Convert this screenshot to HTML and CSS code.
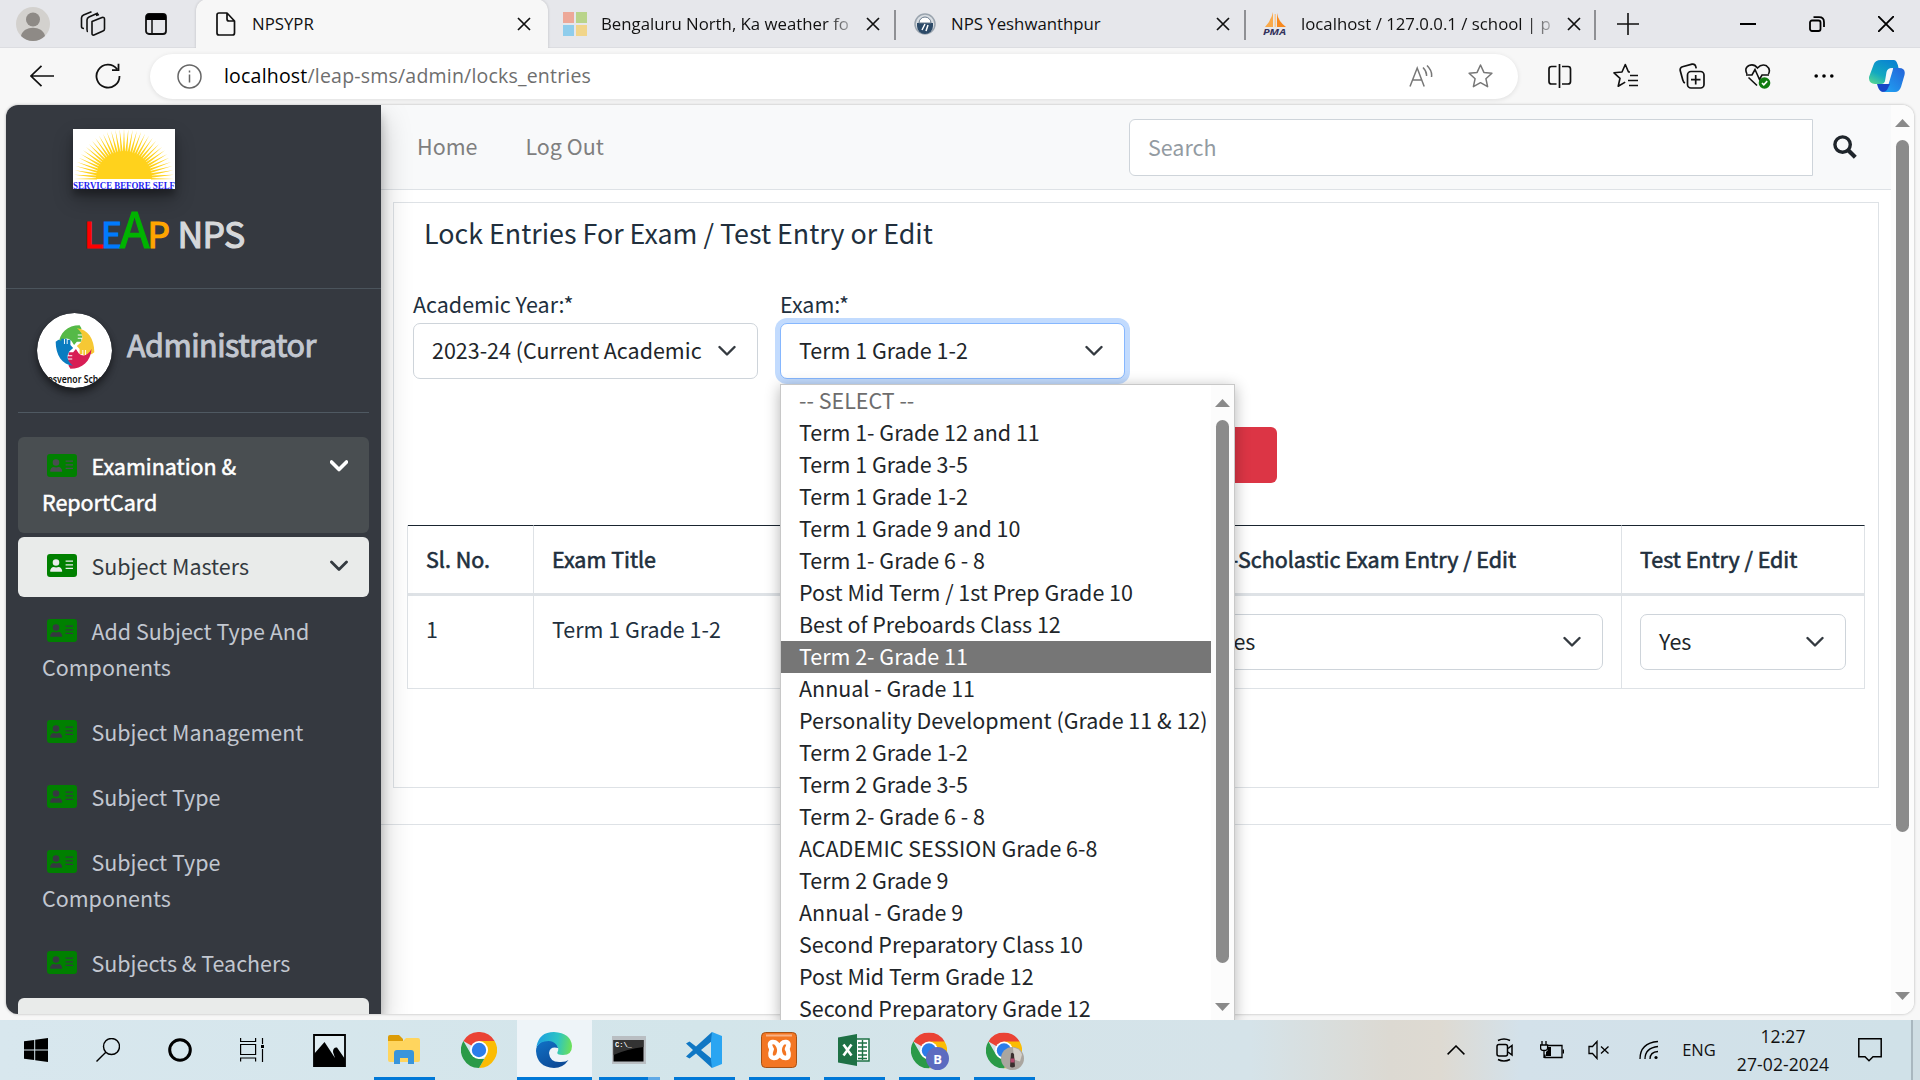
FILE: index.html
```html
<!DOCTYPE html>
<html lang="en">
<head>
<meta charset="utf-8">
<title>NPSYPR</title>
<link rel="stylesheet" href="styles.css">
</head>
<body>
<svg class="defs" aria-hidden="true">
  <defs>
    <symbol id="i-card" viewBox="0 0 30 23"><path fill="currentColor" fill-rule="evenodd" d="M3 0h24a3 3 0 0 1 3 3v17a3 3 0 0 1-3 3H3a3 3 0 0 1-3-3V3a3 3 0 0 1 3-3zM9 5.2a3.3 3.3 0 1 0 0 6.600a3.300 3.300 0 1 0 0-6.600zM3.700 17.800h11c.4 0 .6-.3.5-.7-.3-2.400-1.500-4.100-3.700-4.100-1 .6-3.600.6-4.700 0-2.200 0-3.400 1.700-3.700 4.100 0 .4.200.7.600.7zM18.600 6.600v1.200h7.400V6.600zM18.600 10.200v1.200h7.400v-1.200zM18.600 13.800v1.200h7.400v-1.200z"/></symbol>
    <symbol id="i-chev" viewBox="0 0 18 12"><path d="M1.500 2 9 9.500 16.500 2" fill="none" stroke="currentColor" stroke-linecap="round" stroke-linejoin="round"/></symbol>
    <symbol id="i-x" viewBox="0 0 14 14"><path d="M1 1l12 12M13 1L1 13" fill="none" stroke="#111" stroke-width="1.700"/></symbol>
    <symbol id="i-chrome" viewBox="0 0 36 36">
      <path fill="#ea4335" d="M18 18 2.400 9A18 18 0 0 1 33.600 9z"/>
      <path fill="#fbbc04" d="M18 9h15.600A18 18 0 0 1 18 36l7.800-13.500z"/>
      <path fill="#2a9a48" d="M2.400 9l7.800 13.500L18 27h5.200L18 36A18 18 0 0 1 2.400 9z"/>
      <circle cx="18" cy="18" r="9" fill="#fff"/><circle cx="18" cy="18" r="7.200" fill="#2b7de9"/>
    </symbol>
    <g id="ray"><path fill="#ffd21c" d="M27 -1.100 50 0 27 1.100z"/></g>
    <g id="rays"><use href="#ray"/><use href="#ray" transform="rotate(-5)"/><use href="#ray" transform="rotate(-10)"/><use href="#ray" transform="rotate(-15)"/><use href="#ray" transform="rotate(-20)"/><use href="#ray" transform="rotate(-25)"/></g>
    <path id="hand" d="M-18-2C-17-14-8-21 5-21L7-18 6-15H8V-12H3V-11H8V-9H3V-8H7V-5H2L-1-2-4-6C-9-10-14-8-18-2z"/>
    <linearGradient id="edge-a" x1="0" y1="0.300" x2="1" y2="0.400"><stop offset="0" stop-color="#1b9de2"/><stop offset=".6" stop-color="#2cc4c4"/><stop offset="1" stop-color="#6be05a"/></linearGradient>
    <linearGradient id="edge-b" x1="0" y1="0" x2="0.600" y2="1"><stop offset="0" stop-color="#1173c8"/><stop offset="1" stop-color="#0c4a97"/></linearGradient>
    <linearGradient id="cop-a" x1="0" y1="1" x2="0.600" y2="0"><stop offset="0" stop-color="#5fdc8c"/><stop offset=".45" stop-color="#12a9c0"/><stop offset="1" stop-color="#0a86d0"/></linearGradient>
    <linearGradient id="cop-b" x1="0" y1="1" x2="1" y2="0"><stop offset="0" stop-color="#1fa8f5"/><stop offset="1" stop-color="#2463d8"/></linearGradient>
  </defs>
</svg>

<header class="tabstrip">
  <div class="strip-tools">
    <svg width="34" height="34" viewBox="0 0 34 34"><circle cx="17" cy="17" r="17" fill="#d3d1ce"/><circle cx="17" cy="12.500" r="7" fill="#8e8a86"/><path d="M5 29c2-11 22-11 24 0a17 17 0 0 1-24 0z" fill="#8e8a86"/></svg>
    <svg width="26" height="26" viewBox="0 0 26 26" fill="none" stroke="#111" stroke-width="1.600" stroke-linejoin="round"><path d="M12 10.500 22 6.500q2.500-.5 2.500 1.500v10q0 1.500-1.500 2l-9 4q-2 .5-2-1.500zM8 20.500q-1 0-1-2V9q0-2 2-3l9-4M4 17.500q-2.500 0-2.500-2V7q0-2 2-3l8-3.200M16 4.500l3-1"/></svg>
    <svg width="22" height="22" viewBox="0 0 22 22"><rect x="1" y="1" width="20" height="20" rx="3" fill="none" stroke="#111" stroke-width="1.800"/><path d="M1 7V4q0-3 3-3h14q3 0 3 3v3z"/><path d="M7 7v14" stroke="#111" stroke-width="1.500"/></svg>
  </div>
  <div class="tab tab-active">
    <svg class="fav" width="20" height="24" viewBox="0 0 20 24" fill="none" stroke="#111" stroke-width="1.700" stroke-linejoin="round"><path d="M1 3q0-2 2-2h8l7.500 8v12q0 2-2 2H3q-2 0-2-2zM11 1v6q0 2 2 2h5.500"/></svg>
    <span class="tab-title">NPSYPR</span><svg class="x"><use href="#i-x"/></svg>
  </div>
  <div class="tab tab-sep">
    <svg class="fav" width="24" height="24" viewBox="0 0 24 24"><path fill="#eda898" d="M0 0h11v11H0z"/><path fill="#b9d48a" d="M13 0h11v11H13z"/><path fill="#8fcdec" d="M0 13h11v11H0z"/><path fill="#f1d58a" d="M13 13h11v11H13z"/></svg>
    <span class="tab-title faded">Bengaluru North, Ka weather fo</span><svg class="x"><use href="#i-x"/></svg>
  </div>
  <div class="tab tab-sep">
    <svg class="fav" width="24" height="24" viewBox="0 0 24 24"><circle cx="12" cy="12" r="10" fill="#d9dee3" stroke="#9aa4ae" stroke-width="1.500"/><path d="M4 11h16v3a8 8 0 0 1-16 0z" fill="#2c4a68"/><path d="M6 11a6 6 0 0 1 12 0z" fill="#fff" stroke="#67788a"/><path d="M9 18l3-6M13 19l2-6" stroke="#fff" stroke-width="1.500"/></svg>
    <span class="tab-title">NPS Yeshwanthpur</span><svg class="x"><use href="#i-x"/></svg>
  </div>
  <div class="tab tab-sep">
    <svg class="fav" width="24" height="24" viewBox="0 0 24 24"><path fill="#f9a94a" d="M10 0v15H2q6-6 8-15z"/><path fill="#f7891f" d="M14 1q1 8 9 14h-9z"/><path fill="#fbc98d" d="M11.500 2h1.500v13h-1.500z"/><text x="0" y="23" class="pma" textLength="23" lengthAdjust="spacingAndGlyphs">PMA</text></svg>
    <span class="tab-title faded">localhost / 127.0.0.1 / school | p</span><svg class="x"><use href="#i-x"/></svg>
  </div>
  <svg class="plus" width="22" height="22" viewBox="0 0 22 22"><path d="M11 0v22M0 11h22" stroke="#111" stroke-width="1.600"/></svg>
  <div class="win-btns">
    <svg width="16" height="16" viewBox="0 0 16 16"><path d="M0 8h16" stroke="#000" stroke-width="2"/></svg>
    <svg width="16" height="16" viewBox="0 0 16 16" fill="none" stroke="#000" stroke-width="1.800"><rect x="1" y="4.500" width="10.500" height="10.500" rx="2"/><path d="M4.500 1.200H10q5 0 5 5V11"/></svg>
    <svg width="16" height="16" viewBox="0 0 16 16"><path d="M0 0l16 16M16 0 0 16" stroke="#000" stroke-width="1.900"/></svg>
  </div>
</header>

<div class="toolbar">
  <svg class="back" width="24" height="22" viewBox="0 0 24 22" fill="none" stroke="#111" stroke-width="1.700"><path d="M24 11H1M11.500 .8 1 11l10.500 10.200"/></svg>
  <svg class="reload" width="26" height="26" viewBox="0 0 26 26" fill="none" stroke="#111" stroke-width="1.800"><path d="M24.500 13A11.500 11.500 0 1 1 22 6M23.500 .8V7.200H17"/></svg>
  <div class="omnibox">
    <svg width="25" height="25" viewBox="0 0 25 25" fill="none" stroke="#666" stroke-width="1.500"><circle cx="12.500" cy="12.500" r="11.500"/><path d="M12.500 10.500v8M12.500 6.500v2"/></svg>
    <span class="url"><b>localhost</b>/leap-sms/admin/locks_entries</span>
    <svg class="read" width="24" height="22" viewBox="0 0 24 22" fill="none" stroke="#777" stroke-width="1.500"><path d="M1 21.500 8.200 3l7 18.500M3.500 15h9.500M14 2.500q4 4 3.500 8.500M18 .5q5.500 5.500 4.500 11.500"/></svg>
    <svg width="25" height="24" viewBox="0 0 25 24" fill="none" stroke="#777" stroke-width="1.500" stroke-linejoin="round"><path d="M12.500 1l3.400 7.400 8 .9-6 5.400 1.700 8-7.100-4-7.100 4 1.700-8-6-5.400 8-.9z"/></svg>
  </div>
  <div class="bar-icons">
    <svg width="26" height="26" viewBox="0 0 26 26" fill="none" stroke="#111" stroke-width="1.700"><path d="M9.500 3.500H4.500q-2.500 0-2.500 2.500v12.500q0 2.500 2.500 2.500h5M15 3.500h6q2.500 0 2.500 2.500v12.500q0 2.500-2.500 2.500h-6M12.500 1v24"/></svg>
    <svg width="26" height="26" viewBox="0 0 26 26" fill="none" stroke="#111" stroke-width="1.600" stroke-linejoin="round"><path d="M17 9l-1.500 0L12.300 1.500 9 9l-8 .8 6 5.500-1.800 8 7-4.200M17 12.500h8M15 17.500h10M16 22.500h9"/></svg>
    <svg width="26" height="26" viewBox="0 0 26 26" fill="none" stroke="#111" stroke-width="1.700"><rect x="8.500" y="8.500" width="16.500" height="16.500" rx="3.500"/><path d="M16.700 12v9.500M12 16.700h9.500M6 20q-1.500-.5-2.200-3L1.200 7.500Q.8 4.500 3.500 3.700L13 1.200q3-.5 3.700 2.200l.5 2"/></svg>
    <svg width="26" height="26" viewBox="0 0 26 26" fill="none" stroke="#111" stroke-width="1.600"><path d="M2 11Q-1 5 4 2.500 9 .5 12.500 5 16.500 .5 21.500 2.800 26 6 23.500 11M3.500 14.500l8.500 8M1 12h6l3-5.500 4.500 10 2.500-4.500h7"/><circle cx="19.500" cy="20" r="5.800" fill="#107c10" stroke="none"/><path d="M17 20l1.800 1.900 3.400-3.800" stroke="#fff"/></svg>
    <svg width="20" height="6" viewBox="0 0 20 6"><circle cx="2.200" cy="3" r="1.800"/><circle cx="10" cy="3" r="1.800"/><circle cx="17.800" cy="3" r="1.800"/></svg>
    <svg width="36" height="34" viewBox="0 0 36 34"><path fill="url(#cop-b)" d="M24 9h6q7 0 5.500 7L32 28q-1.800 5-6 5H12q5 0 7-6l4.500-15q.8-3 .5-3z"/><path fill="#1646c8" d="M8 25h13l-3 6q-2 2-4 2-4 0-6-8z"/><path fill="url(#cop-a)" d="M12 1h13q3 0 4.500 8h-6q-3 0-4 4l-3 9q-1.200 3-4.500 3H6q-6.500 0-6-7L4.500 6Q6 1 12 1z"/><path fill="#f4f8fc" d="M17.500 13q1-4 5.500-4-1 2-2 5l-2.500 8q-1 3-4 3 1-1 1.500-3z"/></svg>
  </div>
</div>

<main class="frame">
  <aside class="sidebar">
    <div class="brand">
      <svg class="sun" width="102" height="60" viewBox="0 0 102 60"><path fill="#fff" d="M0 0h102v60H0z"/><g transform="translate(51 50)"><use href="#rays"/><use href="#rays" transform="rotate(-30)"/><use href="#rays" transform="rotate(-60)"/><use href="#rays" transform="rotate(-90)"/><use href="#rays" transform="rotate(-120)"/><use href="#rays" transform="rotate(-150)"/><use href="#ray" transform="rotate(-180)"/></g><path fill="#ffd21c" d="M23 50a28 28 0 0 1 56 0z"/><path fill="#fff" d="M0 50.500h102V60H0z"/><text x="0" y="59.500" textLength="102" lengthAdjust="spacingAndGlyphs" class="motto">SERVICE BEFORE SELF</text></svg>
      <div class="leap"><span class="l">L</span><span class="e">E</span><span class="a">A</span><span class="p">P</span> <b>NPS</b></div>
    </div>
    <div class="user">
      <div class="avatar"><svg width="75" height="75" viewBox="0 0 75 75"><circle cx="37.500" cy="37.500" r="37.500" fill="#fff"/><g transform="translate(38 34) scale(.92 1.040)"><use href="#hand" fill="#55b947"/><use href="#hand" fill="#f6c834" transform="rotate(90)"/><use href="#hand" fill="#d81e55" transform="rotate(180)"/><use href="#hand" fill="#0a7cc0" transform="rotate(270)"/></g><text x="37.500" y="70" class="school" text-anchor="middle" textLength="74" lengthAdjust="spacingAndGlyphs">Grosvenor School</text></svg></div>
      <span>Administrator</span>
    </div>
    <nav class="menu">
      <div class="item item-open"><svg class="card"><use href="#i-card"/></svg>Examination &amp;<br>ReportCard<svg class="caret heavy"><use href="#i-chev"/></svg></div>
      <div class="item item-light"><svg class="card"><use href="#i-card"/></svg>Subject Masters<svg class="caret"><use href="#i-chev"/></svg></div>
      <div class="item"><svg class="card"><use href="#i-card"/></svg>Add Subject Type And<br>Components</div>
      <div class="item"><svg class="card"><use href="#i-card"/></svg>Subject Management</div>
      <div class="item"><svg class="card"><use href="#i-card"/></svg>Subject Type</div>
      <div class="item"><svg class="card"><use href="#i-card"/></svg>Subject Type<br>Components</div>
      <div class="item"><svg class="card"><use href="#i-card"/></svg>Subjects &amp; Teachers</div>
      <div class="item item-light"></div>
    </nav>
  </aside>
  <section class="content">
    <div class="navbar">
      <span>Home</span><span>Log Out</span>
      <div class="search">Search</div>
      <svg class="glass" width="24" height="24" viewBox="0 0 24 24" fill="none" stroke="#1f252b"><circle cx="9.600" cy="9.600" r="7.700" stroke-width="3.400"/><path d="M15 15l7.300 7.300" stroke-width="4.200"/></svg>
    </div>
    <div class="panel">
      <h1>Lock Entries For Exam / Test Entry or Edit</h1>
      <div class="fields">
        <div class="field"><label>Academic Year:*</label><div class="select"><span>2023-24 (Current Academic</span><svg class="chev"><use href="#i-chev"/></svg></div></div>
        <div class="field"><label>Exam:*</label><div class="select focus"><span>Term 1 Grade 1-2</span><svg class="chev"><use href="#i-chev"/></svg></div></div>
      </div>
      <div class="actions"><div class="btn-danger"></div></div>
      <div class="table">
        <div class="cell head">Sl. No.</div><div class="cell head">Exam Title</div><div class="cell head"></div><div class="cell head">Co-Scholastic Exam Entry / Edit</div><div class="cell head">Test Entry / Edit</div>
        <div class="cell">1</div><div class="cell">Term 1 Grade 1-2</div><div class="cell"></div>
        <div class="cell"><div class="select"><span>Yes</span><svg class="chev"><use href="#i-chev"/></svg></div></div>
        <div class="cell"><div class="select"><span>Yes</span><svg class="chev"><use href="#i-chev"/></svg></div></div>
      </div>
    </div>
    <div class="footer"></div>
  </section>
  <div class="scroll page-scroll"><i class="up"></i><i class="thumb"></i><i class="down"></i></div>
</main>

<div class="dropdown">
  <ul>
    <li class="muted">-- SELECT --</li><li>Term 1- Grade 12 and 11</li><li>Term 1 Grade 3-5</li><li>Term 1 Grade 1-2</li><li>Term 1 Grade 9 and 10</li><li>Term 1- Grade 6 - 8</li><li>Post Mid Term / 1st Prep Grade 10</li><li>Best of Preboards Class 12</li><li class="hot">Term 2- Grade 11</li><li>Annual - Grade 11</li><li>Personality Development (Grade 11 &amp; 12)</li><li>Term 2 Grade 1-2</li><li>Term 2 Grade 3-5</li><li>Term 2- Grade 6 - 8</li><li>ACADEMIC SESSION Grade 6-8</li><li>Term 2 Grade 9</li><li>Annual - Grade 9</li><li>Second Preparatory Class 10</li><li>Post Mid Term Grade 12</li><li>Second Preparatory Grade 12</li>
  </ul>
  <div class="scroll list-scroll"><i class="up"></i><i class="thumb"></i><i class="down"></i></div>
</div>

<footer class="taskbar">
  <div class="sys">
    <svg width="24" height="24" viewBox="0 0 24 24"><path d="M0 3.300 10.200 2v9.500H0zM11.200 1.800 24 0v11.500H11.200zM0 12.500h10.200V22L0 20.700zM11.200 12.500H24V24l-12.800-1.800z"/></svg>
    <svg width="24" height="24" viewBox="0 0 24 24" fill="none" stroke="#000" stroke-width="1.400"><circle cx="15.500" cy="8.500" r="8"/><path d="M9.800 14.200.5 23.500"/></svg>
    <svg width="24" height="24" viewBox="0 0 24 24"><circle cx="12" cy="12" r="10.300" fill="none" stroke="#000" stroke-width="3"/></svg>
    <svg width="24" height="24" viewBox="0 0 24 24" fill="none" stroke="#000" stroke-width="1.200"><path d="M.6 0v3.500h15V0M.6 6.500h15v10H.6zM.6 23.500V20h15v3.500M22.500 0v6M22.500 11v13"/><path d="M21 7h3v3h-3z" fill="#000" stroke="none"/></svg>
  </div>
  <div class="app"><svg width="33" height="33" viewBox="0 0 33 33"><path d="M1 1h31v31H1z" fill="#e1eef3" stroke="#000" stroke-width="1.800"/><path d="M1 20 11.500 8 22 24l-2-6q0-5 4-4.500L32 25v8H1z"/></svg></div>
  <div class="app run"><svg width="34" height="30" viewBox="0 0 34 30"><path fill="#dc9c07" d="M1 2q0-2 2-2h9l4 4v6H1z"/><path fill="#ffd55e" d="M1 6h15l3-3h12q2 0 2 2v20q0 2-2 2H3q-2 0-2-2z"/><path fill="#3995dc" d="M7 29V18q0-3 3-3h14q3 0 3 3v11h-6v-6h-8v6z"/></svg></div>
  <div class="app"><svg width="36" height="36"><use href="#i-chrome"/></svg></div>
  <div class="app run active"><svg width="36" height="36" viewBox="0 0 36 36"><path fill="url(#edge-b)" d="M0 19C0 12 6 8 13 8q9 1 9 8-8-2-9 5 1 10 12 9 5 0 7.500-2Q27 36 18 36 1 35 0 19z"/><path fill="url(#edge-a)" d="M.3 15Q3 0 18 0q17 1 18 14 0 9-9 9-7 0-5.500-3 2-3-1-7-3-4-8-4Q4 9 .3 15z"/></svg></div>
  <div class="app run run-multi"><svg width="34" height="28" viewBox="0 0 34 28"><path fill="#b9bec2" d="M0 0h34v28H0z"/><path d="M1.500 4h30v21.500h-30z"/><path fill="#333" d="M1.500 4h30v7Q15 13 1.500 19z"/><text x="3" y="11" class="prompt">C:\_</text></svg></div>
  <div class="app run"><svg width="36" height="36" viewBox="0 0 36 36"><path fill="#0f77c4" d="M26 0 10 14.500 3.500 9.500 0 11.500 7 18 0 24.500l3.500 2L10 21.500 26 36V27L15 18l11-9z"/><path fill="#2aa5f2" d="M26 0l10 4v28l-10 4-1-8V9z"/></svg></div>
  <div class="app run"><svg width="36" height="36" viewBox="0 0 36 36"><rect x=".5" y=".5" width="35" height="35" rx="4" fill="#f37623" stroke="#a85114"/><path d="M5 2.500h26v2H5z" fill="#f9b184"/><g fill="none" stroke="#fff" stroke-width="4.600" stroke-linejoin="round" stroke-linecap="round"><path d="M10.500 17q-3.500-6 1-7 5-.5 7 7.500 1.500-8 6.500-7.500 4.500 1 1 7"/><path d="M10.500 17.500q-3 8 2.500 8.500 5 0 5.500-8 1 8 6 8 5-.5 2-8.500"/></g></svg></div>
  <div class="app run"><svg width="32" height="32" viewBox="0 0 32 32"><path fill="#fff" stroke="#1e7145" stroke-width="1.500" d="M18 5h13v22H18z"/><path stroke="#1e7145" stroke-width="1.400" d="M20 9h9M20 13h9M20 17h9M20 21h9M20 24.500h9M24.500 6v20"/><path fill="#1e7145" d="M0 3.500 19 0v32L0 28.500z"/><path d="M5.500 10.500l8 11M13.500 10.500l-8 11" stroke="#fff" stroke-width="2.600"/></svg></div>
  <div class="app run"><svg width="40" height="39" viewBox="-2 -1.500 40 39"><use href="#i-chrome" width="36" height="36"/><circle cx="26.500" cy="26" r="11.500" fill="#5c6bc0"/><text x="26.500" y="31" text-anchor="middle" class="badge">B</text></svg></div>
  <div class="app run"><svg width="40" height="39" viewBox="-2 -1.500 40 39"><use href="#i-chrome" width="36" height="36"/><circle cx="26.500" cy="26" r="11.500" fill="#aaa6a0"/><path d="M27 15q7 1 9 7l-2 7-6-2z" fill="#d4d0c9"/><path d="M25 21q2-2 3 1l1 12q-3 2-5 0z" fill="#3a302f"/><path d="M24.500 26h4v4h-4z" fill="#b24a6c"/></svg></div>
  <div class="tray">
    <svg width="18" height="10" viewBox="0 0 18 10" fill="none" stroke="#000" stroke-width="1.500"><path d="M.6 9.400 9 1l8.400 8.400"/></svg>
    <svg width="18" height="24" viewBox="0 0 18 24" fill="none" stroke="#000" stroke-width="1.500"><rect x="1" y="6.500" width="10.500" height="11.500" rx="2"/><path d="M12 10.500l4-3v9.500l-4-3M2 2.500q6-3 12 0M2 21.500q6 3 12 0"/></svg>
    <svg width="24" height="18" viewBox="0 0 24 18" fill="none" stroke="#000" stroke-width="1.300"><path d="M8 4.500h14v12H5v-3M23.500 8.500v4M2 0v4M6 0v4M.6 4h7v3q0 2.500-3.500 2.500T.6 7zM4 10v7"/><path d="M6 15V11l2-2V6h3v9z" fill="#000" stroke="none"/></svg>
    <svg width="22" height="20" viewBox="0 0 22 20" fill="none" stroke="#000" stroke-width="1.300"><path d="M1 6.500h3.500L9 1.500v17l-4.500-5H1zM13 6.500l7.500 7M20.500 6.500l-7.500 7"/></svg>
    <svg width="20" height="20" viewBox="0 0 20 20" fill="none" stroke="#000" stroke-width="1.300"><path d="M1 19Q1 3 19 1.500M6 19Q6 8 19 6.500M11 19q0-7 8-7.500"/><circle cx="17" cy="17.500" r="1.600" fill="#000" stroke="none"/></svg>
    <span class="lang">ENG</span>
    <span class="clock">12:27<br>27-02-2024</span>
    <svg width="24" height="24" viewBox="0 0 24 24" fill="none" stroke="#000" stroke-width="1.500"><path d="M.8.800h22.400v18H15l-4 4-4-4H.8z"/></svg>
  </div>
</footer>
</body>
</html>
```

FILE: styles.css
```css
* { box-sizing: border-box; }
body {
  margin: 0; width: 1920px; height: 1080px; overflow: hidden;
  display: flex; flex-direction: column; position: relative;
  background: #f7f7f7; color: #212529;
  font: 21.470px/36px "Noto Sans CJK SC", "Noto Sans", sans-serif;
}
svg { display: block; flex: none; }
.defs { position: absolute; width: 0; height: 0; }

/* browser chrome */
.tabstrip, .toolbar, .taskbar { font-family: "Open Sans", "Noto Sans", sans-serif; }
.tabstrip { height: 48px; flex: none; display: flex; align-items: center; background: #e6e7eb; border-bottom: 1px solid #dcdde1; }
.strip-tools { width: 196px; flex: none; display: flex; align-items: center; padding-left: 16px; gap: 30px; }
.strip-tools svg:last-child { margin-left: 9px; }
.tab { width: 350px; height: 48px; flex: none; display: flex; align-items: center; padding: 0 18px 0 15px; font-size: 16.800px; color: #111; }
.tab-active { width: 352px; height: 49px; background: #f7f7f7; border-radius: 12px 12px 0 0; padding-left: 20px; padding-right: 17px; box-shadow: 0 0 3px rgba(0,0,0,.18); clip-path: inset(-4px -4px 0 -4px); }
.tab-active .fav { margin-right: 16px; }
.tab-sep { position: relative; }
.tab-sep::after { content: ""; position: absolute; right: 2px; top: 10px; width: 2px; height: 30px; background: #8f9094; }
.tab-sep .fav { margin-right: 14px; }
.tab-title { flex: 1; white-space: nowrap; line-height: 28px; }
.faded { -webkit-mask-image: linear-gradient(90deg, #000 226px, transparent 258px); mask-image: linear-gradient(90deg, #000 226px, transparent 258px); }
.x { width: 14px; height: 14px; margin-left: 16px; }
.pma { font: italic bold 9.500px "Open Sans", sans-serif; fill: #33335c; }
.plus { margin-left: 19px; }
.win-btns { margin-left: auto; display: flex; gap: 53px; padding-right: 26px; }
.toolbar { height: 57px; flex: none; display: flex; align-items: center; padding-bottom: 1px; }
.back { margin-left: 30px; }
.reload { margin-left: 41px; }
.omnibox { width: 1368px; height: 45px; margin-left: 29px; border-radius: 23px; background: #fff; box-shadow: 0 1px 5px rgba(0,0,0,.1); display: flex; align-items: center; padding: 0 25px 0 27px; }
.url { margin-left: 22px; font-size: 19.500px; letter-spacing: .2px; color: #6e6e6e; flex: 1; line-height: 30px; }
.url b { font-weight: 400; color: #000; }
.read { margin-right: 35px; }
.bar-icons { flex: 1; display: grid; grid-template-columns: 67px 66px 66px 66px 66px 60px; justify-items: center; align-items: center; padding-left: 8px; }

/* page */
.frame { margin-left: 6px; width: 1908px; height: 909px; flex: none; display: flex; background: #fff; border-radius: 12px; overflow: hidden; box-shadow: 0 0 3px rgba(0,0,0,.28); }
.sidebar { width: 375px; flex: none; background: #353940; color: #c2c7d0; box-shadow: 0 14px 28px rgba(0,0,0,.25), 0 10px 10px rgba(0,0,0,.22); position: relative; z-index: 1; }
.brand { height: 184px; border-bottom: 1px solid #4b545c; padding: 24px 0 0 67px; }
.sun { box-shadow: 0 10px 20px rgba(0,0,0,.3), 0 6px 6px rgba(0,0,0,.25); }
.motto { font: bold 9.500px "Liberation Serif", serif; fill: #1c1cf0; }
.leap { padding: 4px 0 0 11px; height: 84px; line-height: 80px; font-size: 35.500px; letter-spacing: -2.200px; color: #d6d8da; white-space: nowrap; -webkit-text-stroke: 1.200px currentColor; }
.leap span { -webkit-text-stroke: 1.200px currentColor; }
.leap b { font-weight: 400; letter-spacing: -.6px; margin-left: 4px; }
.leap .l { color: #f00; } .leap .e { color: #007bff; } .leap .a { color: #00b300; font-size: 49px; line-height: 0; } .leap .p { color: #ffa500; }
.user { height: 124px; margin: 0 12px; border-bottom: 1px solid #4f5962; display: flex; padding: 24px 0 0 19px; font-size: 30.500px; letter-spacing: -.5px; line-height: 62px; -webkit-text-stroke: 1px currentColor; }
.user span { margin-left: 15px; }
.avatar { width: 75px; height: 75px; border-radius: 50%; overflow: hidden; box-shadow: 0 3px 6px rgba(0,0,0,.3), 0 6px 8px rgba(0,0,0,.3); -webkit-text-stroke: 0; letter-spacing: 0; }
.school { font: 600 10.500px "Noto Sans", sans-serif; fill: #111; }
.menu { margin: 24px 12px 0; display: flex; flex-direction: column; gap: 4.900px; }
.item { min-height: 60px; padding: 11px 24px 13px; border-radius: 6px; position: relative; white-space: nowrap; }
.item-open { background: #494e51; color: #fff; -webkit-text-stroke: .5px currentColor; }
.item-light { background: #e9ebea; color: #343a40; }
.item-open + .item-light { margin-top: -.8px; }
.card { display: inline-block; width: 30px; height: 23px; margin: 0 14.500px 0 5px; vertical-align: -2px; color: #008000; }
.caret { position: absolute; right: 21px; top: 23px; width: 18px; height: 12px; stroke-width: 2.800px; }
.heavy { stroke-width: 3.600px; }
.content { width: 1510px; flex: none; }
.navbar { height: 85px; background: #f8f9fa; border-bottom: 1px solid #dee2e6; display: flex; align-items: center; padding-left: 36px; gap: 48px; color: #7f7f7f; }
.navbar span { padding-bottom: 2px; }
.search { width: 684px; height: 57px; margin-left: auto; border: 1px solid #ced4da; border-radius: 6px 0 0 6px; background: #fff; padding-left: 18px; line-height: 54px; color: #939ba2; }
.glass { margin: 0 34px 0 -28px; }
.panel { margin: 12px 0 0 12px; width: 1486px; height: 586px; border: 1px solid #dee2e6; color: #212f3d; }
.panel h1 { margin: 10px 0 0 30px; height: 40px; line-height: 40px; font-size: 26.840px; font-weight: 400; }
.fields { display: flex; gap: 22px; margin: 33px 0 0 19px; }
.field { width: 345px; }
.field label { display: block; margin-bottom: 1px; }
.select { height: 56px; border: 1px solid #ced4da; border-radius: 7px; background: #fff; color: #212529; display: flex; align-items: center; justify-content: space-between; padding: 0 21px 0 18px; white-space: nowrap; }
.select span { padding-bottom: 2px; }
.focus { border-color: #86b7fe; box-shadow: 0 0 0 5px #c2dbfe; }
.chev { width: 18px; height: 12px; color: #343a40; stroke-width: 2.400px; }
.actions { margin-top: 48px; padding-left: 640px; }
.btn-danger { width: 243px; height: 56px; border-radius: 6px; background: #dc3545; }
.table { margin: 42px 0 0 13px; width: 1458px; display: grid; grid-template-columns: 126px 330px 322px 436px 243px; border-left: 1px solid #dee2e6; }
.cell { border-right: 1px solid #dee2e6; border-bottom: 1px solid #dee2e6; padding: 18px 18px; height: 93px; white-space: nowrap; line-height: 30px; }
.head { height: 71px; padding-top: 16px; line-height: 34px; border-top: 1px solid #1a2530; border-bottom: 3px solid #dee2e6; -webkit-text-stroke: .6px currentColor; }
.footer { margin-top: 36px; border-top: 1px solid #dee2e6; }

/* scrollbars */
.scroll { background: #fcfcfc; display: flex; flex-direction: column; align-items: center; }
.scroll i { flex: none; }
.page-scroll { flex: 1; padding: 14px 0 14px; }
.up, .down { width: 15px; height: 8px; background: #8a8a8a; clip-path: polygon(50% 0, 100% 100%, 0 100%); }
.down { clip-path: polygon(0 0, 100% 0, 50% 100%); margin-top: auto; }
.thumb { width: 13px; border-radius: 7px; background: #8b8b8b; margin-top: 13px; }
.page-scroll .thumb { height: 692px; }

/* select popup */
.dropdown { position: absolute; left: 780px; top: 384px; width: 455px; height: 636px; overflow: hidden; border: 1px solid #c8c8c8; border-bottom: 0; background: #fff; display: flex; box-shadow: 0 3px 14px rgba(0,0,0,.3); clip-path: inset(-20px -20px 0 -20px); }
.dropdown ul { list-style: none; margin: 0; padding: 0; width: 430px; }
.dropdown li { height: 32px; line-height: 30px; padding-left: 18px; white-space: nowrap; }
.muted { color: #6d6d6d; }
.dropdown .hot { background: #767676; color: #fff; }
.list-scroll { flex: 1; padding: 14px 0 9px; }
.list-scroll .thumb { height: 543px; }

/* taskbar */
.taskbar { height: 60px; margin-top: 6px; flex: none; display: flex; background: linear-gradient(90deg, #d8e7ee 0, #d3e5ea 700px, #d5e3e9 1250px, #dcd9d2 1390px, #dedad2 1440px, #d3e1ea 1520px, #d0e1e8 1900px); border-right: 7px solid #cfdde3; }
.sys { display: flex; width: 291px; }
.sys svg { margin: 18px 24px; }
.app { width: 75px; display: flex; align-items: center; justify-content: center; position: relative; left: .5px; }
.run::after { content: ""; position: absolute; left: 7px; right: 7px; bottom: 0; height: 3px; background: #0078d7; }
.active { background: #eef4f8; }
.active::after { left: 0; right: 0; }
.run-multi::after { background: linear-gradient(90deg, #0078d7 80%, #60a9e6 80%); }
.prompt { font: bold 7px "Liberation Mono", monospace; fill: #fff; }
.badge { font: bold 13px "Open Sans", sans-serif; fill: #fff; }
.tray { margin-left: auto; display: grid; grid-template-columns: 50px 48px 46px 48px 52px 48px 120px 54px; width: 482px; justify-items: center; align-items: center; border-right: 2px solid #a9b7bf; color: #111; }
.lang { font-size: 16.500px; line-height: 24px; }
.clock { font-size: 17.500px; line-height: 28px; text-align: center; letter-spacing: .1px; }
```
